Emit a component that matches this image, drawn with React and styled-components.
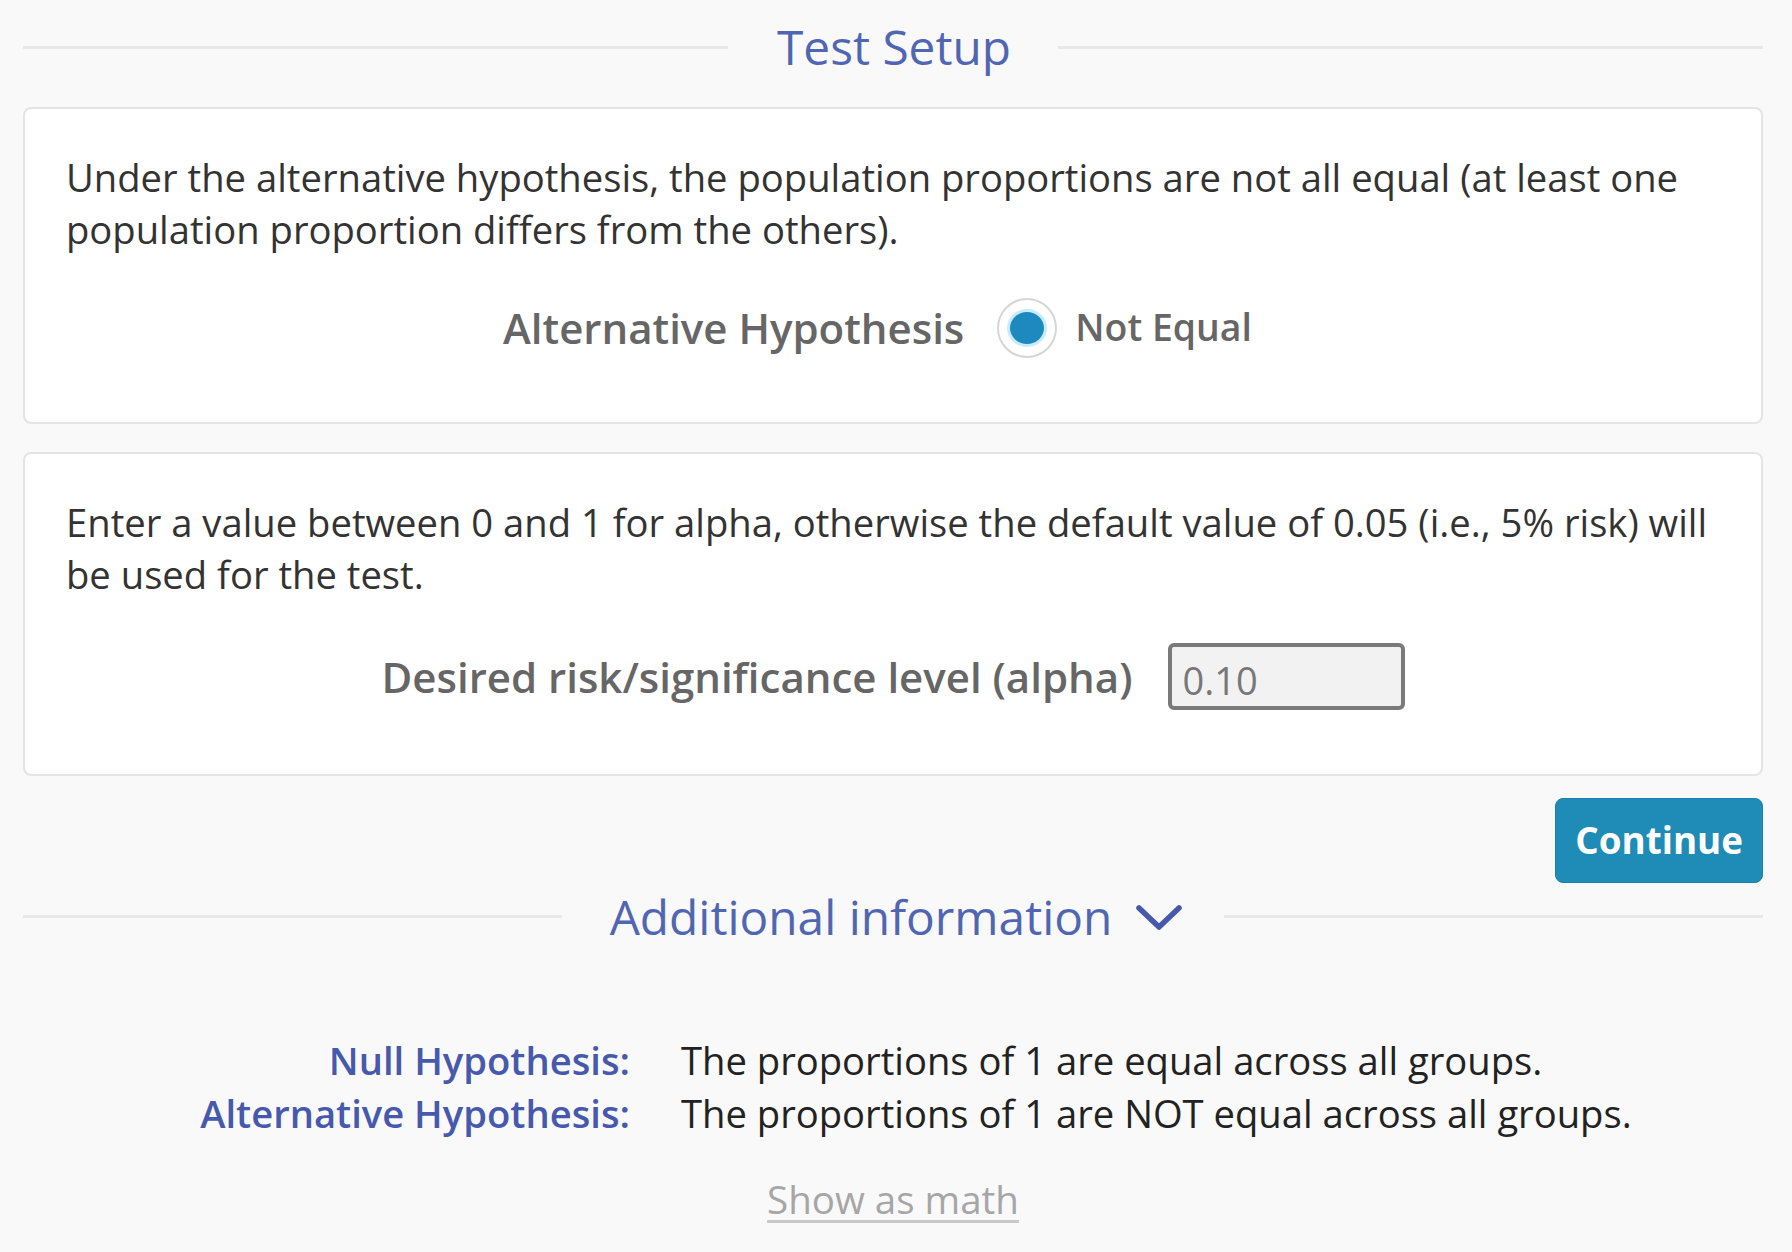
import React from "react";
import styled, { createGlobalStyle } from "styled-components";

const Global = createGlobalStyle`
  html, body { margin: 0; padding: 0; background: #f9f9f9; }
  body { font-family: "Open Sans", "Liberation Sans", sans-serif; color: #333; }
`;

const Page = styled.div`
  padding: 22px 29px 40px 23px;
  display: flex;
  flex-direction: column;
`;

const SectionHeader = styled.div`
  display: flex;
  align-items: center;
  margin-top: ${(p) => p.$mt || 0}px;
`;

const Rule = styled.div`
  flex: 1;
  height: 3px;
  background: #e8e8e8;
`;

const HeaderTitle = styled.div`
  display: flex;
  align-items: center;
  gap: 22px;
  font-size: 47.8px;
  line-height: 50.6px;
  color: #5166b2;
  padding: ${(p) => p.$pad || "0 47px 0 49px"};
`;

const Card = styled.div`
  background: #fff;
  border: 2px solid #e4e4e4;
  border-radius: 8px;
  padding: 42px 40px 64px 41px;
  margin-top: ${(p) => p.$mt || 0}px;
`;

const Para = styled.p`
  margin: 0;
  font-size: 38.2px;
  line-height: 52.6px;
  color: #333;
`;

const ControlRow = styled.div`
  display: flex;
  align-items: center;
  justify-content: center;
  margin-top: 42px;
  padding-right: ${(p) => p.$shift || 0}px;
`;

const ControlLabel = styled.label`
  font-size: 42px;
  line-height: 59px;
  font-weight: 600;
  color: #666;
  margin-right: ${(p) => p.$gap || 35}px;
`;

const RadioOuter = styled.span`
  box-sizing: border-box;
  width: 60px;
  height: 60px;
  border-radius: 50%;
  border: 2px solid #d6d6d6;
  background: #fff;
  display: flex;
  align-items: center;
  justify-content: center;
`;

const RadioDot = styled.span`
  width: 34px;
  height: 32px;
  border-radius: 50%;
  background: #1e89be;
  box-shadow: 0 0 0 3px #c6ecfa;
`;

const OptionText = styled.span`
  font-size: 37.4px;
  line-height: 52.6px;
  font-weight: 600;
  color: #666;
  margin-left: 18px;
`;

const AlphaInput = styled.input`
  box-sizing: border-box;
  width: 237px;
  height: 67px;
  border: 4px solid #7a7a7a;
  border-radius: 6px;
  background: #f2f2f2;
  font-family: "Open Sans", "Liberation Sans", sans-serif;
  font-size: 38px;
  color: #777;
  padding: 8px 10px 0 10px;
  outline: none;
`;

const ButtonRow = styled.div`
  display: flex;
  justify-content: flex-end;
  margin-top: 22px;
`;

const PrimaryButton = styled.button`
  font-family: "Open Sans", "Liberation Sans", sans-serif;
  font-weight: 700;
  font-size: 36.8px;
  line-height: 52.6px;
  color: #fff;
  background: #1f8bb7;
  border: 1px solid #1a82ad;
  border-radius: 8px;
  padding: 15px 19px;
  cursor: pointer;
`;

const HypTable = styled.div`
  display: grid;
  grid-template-columns: 607px auto;
  column-gap: 51px;
  margin-top: 92px;
  line-height: 52.6px;
`;

const HypLabel = styled.div`
  text-align: right;
  font-size: 38.2px;
  font-weight: 600;
  color: #4759ad;
`;

const HypValue = styled.div`
  font-size: 38.2px;
  color: #222;
`;

const MathLink = styled.a`
  align-self: center;
  margin-top: 34px;
  font-size: 38.5px;
  line-height: 52.6px;
  color: #a6a6a6;
  text-decoration: underline;
  text-decoration-color: #c8c8c8;
  text-decoration-thickness: 3px;
  text-underline-offset: 6px;
  cursor: pointer;
`;

const Chevron = () => (
  <svg width="50" height="30" viewBox="0 0 50 30" aria-hidden="true">
    <polyline
      points="5,6 25,25 45,6"
      fill="none"
      stroke="#4759ad"
      strokeWidth="5.5"
      strokeLinecap="round"
      strokeLinejoin="round"
    />
  </svg>
);

export default function App() {
  return (
    <>
      <Global />
      <Page>
        <SectionHeader>
          <Rule />
          <HeaderTitle>Test Setup</HeaderTitle>
          <Rule />
        </SectionHeader>

        <Card $mt={34}>
          <Para>
            Under the alternative hypothesis, the population proportions are not all equal (at least one
            population proportion differs from the others).
          </Para>
          <ControlRow $shift={32}>
            <ControlLabel $gap={33}>Alternative Hypothesis</ControlLabel>
            <RadioOuter>
              <RadioDot />
            </RadioOuter>
            <OptionText>Not Equal</OptionText>
          </ControlRow>
        </Card>

        <Card $mt={28}>
          <Para>
            Enter a value between 0 and 1 for alpha, otherwise the default value of 0.05 (i.e., 5% risk) will
            be used for the test.
          </Para>
          <ControlRow $shift={0}>
            <ControlLabel $gap={36}>Desired risk/significance level (alpha)</ControlLabel>
            <AlphaInput defaultValue="0.10" />
          </ControlRow>
        </Card>

        <ButtonRow>
          <PrimaryButton>Continue</PrimaryButton>
        </ButtonRow>

        <SectionHeader $mt={9}>
          <Rule />
          <HeaderTitle $pad="0 40px 0 48px">
            Additional information
            <Chevron />
          </HeaderTitle>
          <Rule />
        </SectionHeader>

        <HypTable>
          <HypLabel>Null Hypothesis:</HypLabel>
          <HypValue>The proportions of 1 are equal across all groups.</HypValue>
          <HypLabel>Alternative Hypothesis:</HypLabel>
          <HypValue>The proportions of 1 are NOT equal across all groups.</HypValue>
        </HypTable>

        <MathLink>Show as math</MathLink>
      </Page>
    </>
  );
}
